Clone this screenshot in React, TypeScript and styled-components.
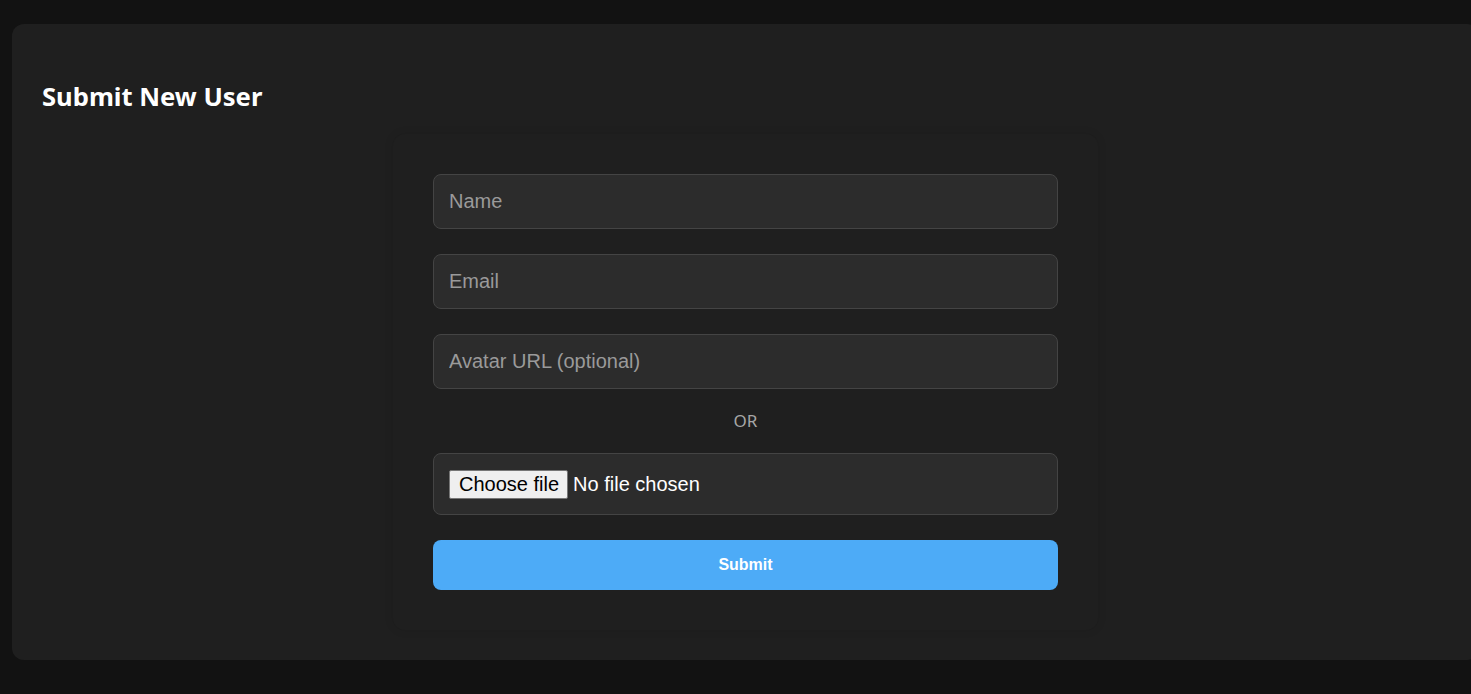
import React, { useState } from "react";
import styled, { createGlobalStyle } from "styled-components";

const Global = createGlobalStyle`
  html, body {
    margin: 0;
    padding: 0;
    background: #121212;
    overflow: hidden;
  }
  body {
    font-family: "Liberation Sans", Arial, sans-serif;
    color: #ffffff;
  }
`;

const Page = styled.div`
  padding: 24px 0 0 12px;
  width: 1479px;
  box-sizing: border-box;
`;

const Card = styled.section`
  background: #1f1f1f;
  border-radius: 12px;
  padding: 30px;
  box-sizing: border-box;
`;

const Heading = styled.h2`
  margin: 26px 0 20px;
  font-family: "Noto Sans", "Open Sans", sans-serif;
  font-size: 25.6px;
  line-height: 34px;
  font-weight: 700;
  color: #ffffff;
`;

const FormBox = styled.form`
  width: 705px;
  margin: 0 auto;
  padding: 40px;
  box-sizing: border-box;
  background: #1f1f1f;
  border-radius: 12px;
  box-shadow: 0 0 10px rgba(0, 0, 0, 0.1);
  display: flex;
  flex-direction: column;
  gap: 25px;
`;

const Field = styled.input`
  display: block;
  width: 100%;
  box-sizing: border-box;
  height: 55px;
  padding: 15px;
  background: #2c2c2c;
  border: 1px solid #444444;
  border-radius: 8px;
  color: #ffffff;
  font-family: "Liberation Sans", Arial, sans-serif;
  font-size: 20px;
  outline: none;
  &::placeholder {
    color: #9a9a9a;
  }
`;

const Divider = styled.div`
  height: 14px;
  line-height: 14px;
  text-align: center;
  font-family: "Noto Sans", "Open Sans", sans-serif;
  font-size: 17px;
  color: #a6a6a6;
`;

const FileBox = styled.label`
  height: 62px;
  box-sizing: border-box;
  padding: 0 15px;
  display: flex;
  align-items: center;
  gap: 5px;
  background: #2c2c2c;
  border: 1px solid #444444;
  border-radius: 8px;
  cursor: pointer;
`;

const HiddenFile = styled.input`
  display: none;
`;

const ChooseButton = styled.span`
  display: inline-flex;
  align-items: center;
  height: 29px;
  box-sizing: border-box;
  padding: 0 8px 0 9px;
  background: #efefef;
  border: 1px solid #767676;
  border-radius: 2px;
  color: #000000;
  font-family: "Liberation Sans", Arial, sans-serif;
  font-size: 20px;
`;

const FileName = styled.span`
  color: #ffffff;
  font-family: "Liberation Sans", Arial, sans-serif;
  font-size: 20px;
`;

const SubmitButton = styled.button`
  height: 50px;
  border: none;
  border-radius: 8px;
  background: #4dabf7;
  color: #ffffff;
  font-family: "Liberation Sans", Arial, sans-serif;
  font-size: 16px;
  font-weight: 700;
  cursor: pointer;
`;

export default function App() {
  const [fileName, setFileName] = useState<string>("");
  return (
    <>
      <Global />
      <Page>
        <Card>
          <Heading>Submit New User</Heading>
          <FormBox onSubmit={(e) => e.preventDefault()}>
            <Field type="text" placeholder="Name" />
            <Field type="email" placeholder="Email" />
            <Field type="text" placeholder="Avatar URL (optional)" />
            <Divider>OR</Divider>
            <FileBox>
              <HiddenFile
                type="file"
                onChange={(e) => setFileName(e.target.files?.[0]?.name ?? "")}
              />
              <ChooseButton>Choose file</ChooseButton>
              <FileName>{fileName || "No file chosen"}</FileName>
            </FileBox>
            <SubmitButton type="submit">Submit</SubmitButton>
          </FormBox>
        </Card>
      </Page>
    </>
  );
}
